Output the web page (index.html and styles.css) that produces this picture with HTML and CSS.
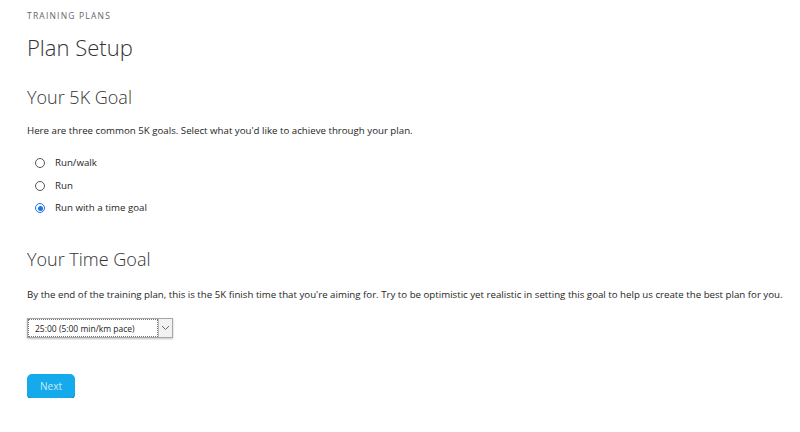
FILE: index.html
```html
<!DOCTYPE html>
<html>
<head>
<meta charset="utf-8">
<link rel="stylesheet" href="styles.css">
</head>
<body>
<main class="page">
  <div class="eyebrow">TRAINING PLANS</div>
  <h1 class="title">Plan Setup</h1>
  <section class="section">
    <h2 class="heading">Your 5K Goal</h2>
    <p class="text">Here are three common 5K goals. Select what you'd like to achieve through your plan.</p>
    <div class="options">
      <label class="option"><span class="radio"></span>Run/walk</label>
      <label class="option"><span class="radio"></span>Run</label>
      <label class="option"><span class="radio checked"></span>Run with a time goal</label>
    </div>
  </section>
  <section class="section section-time">
    <h2 class="heading">Your Time Goal</h2>
    <p class="text text-time">By the end of the training plan, this is the 5K finish time that you're aiming for. Try to be optimistic yet realistic in setting this goal to help us create the best plan for you.</p>
    <div class="select">
      <span class="select-value">25:00 (5:00 min/km pace)</span>
      <span class="select-arrow"><svg width="9" height="6" viewBox="0 0 9 6"><path d="M1 1 L4.5 4.5 L8 1" fill="none" stroke="#666" stroke-width="1"/></svg></span>
    </div>
  </section>
  <button class="btn">Next</button>
</main>
</body>
</html>
```
FILE: styles.css
```css
* { box-sizing: border-box; }
html, body { margin: 0; padding: 0; background: #fff; }
body { font-family: "Open Sans", "Liberation Sans", sans-serif; color: #333; }
.page { padding: 10px 27px 0 27px; display: flex; flex-direction: column; align-items: flex-start; }
.eyebrow { font-size: 8.5px; letter-spacing: 1.2px; color: #666; line-height: 12px; }
.title { margin: 10px 0 0 0; font-size: 22px; font-weight: 300; line-height: 30px; color: #333; }
.section { margin-top: 22px; display: flex; flex-direction: column; align-items: flex-start; }
.section-time { margin-top: 31px; }
.heading { margin: 0; font-size: 18px; font-weight: 300; line-height: 26px; color: #333; }
.text { margin: 14px 0 0 0; font-size: 9.7px; line-height: 14px; color: #1e1e1e; white-space: nowrap; }
.text-time { margin-top: 16px; }
.options { margin-top: 18px; display: flex; flex-direction: column; gap: 8.5px; }
.option { display: flex; align-items: center; gap: 10px; font-size: 9.7px; line-height: 14px; color: #1e1e1e; padding-left: 8px; }
.radio { width: 10px; height: 10px; border-radius: 50%; border: 1px solid #555; display: inline-block; position: relative; }
.radio.checked { border-color: #1a73e8; }
.radio.checked::after { content: ""; position: absolute; left: 1.5px; top: 1.5px; width: 5px; height: 5px; border-radius: 50%; background: #1a73e8; }
.select { margin-top: 16px; width: 146px; height: 20px; display: flex; border: 1px solid #a8a8a8; box-shadow: 0 1px 2px rgba(0,0,0,0.25); }
.select-value { flex: 1; font-size: 8.5px; line-height: 16px; padding: 1px 6px; border: 1px dotted #777; margin: 0; color: #222; }
.select-arrow { width: 14px; display: flex; align-items: center; justify-content: center; background: #f2f2f2; border-left: 1px solid #bbb; }
.btn { margin-top: 36px; width: 48px; height: 24px; border: none; border-radius: 5px; background: #14aaeb; color: #cfe9f7; font-family: "Open Sans", "Liberation Sans", sans-serif; font-size: 10px; box-shadow: 0 1.5px 0 #1b86b8; padding: 0; }
```
